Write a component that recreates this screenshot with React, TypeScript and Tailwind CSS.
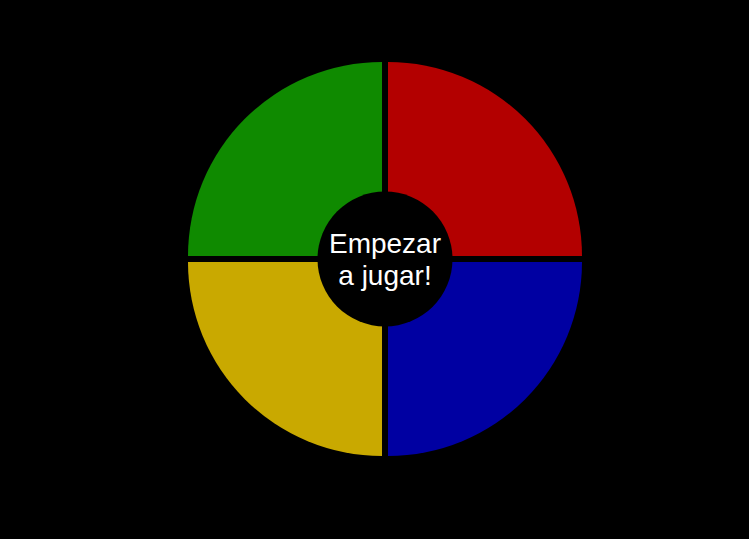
export default function App() {
  const quads = [
    { key: 'green', cls: 'bg-[#0f8a00] rounded-tl-[194px]' },
    { key: 'red', cls: 'bg-[#b30000] rounded-tr-[194px]' },
    { key: 'yellow', cls: 'bg-[#c9a900] rounded-bl-[194px]' },
    { key: 'blue', cls: 'bg-[#0000a2] rounded-br-[194px]' },
  ];

  return (
    <div className="min-h-[539px] w-full bg-black pt-[62px] pl-[188px]">
      {/* Simon board */}
      <div className="relative grid w-[394px] grid-cols-2 gap-[6px]">
        {quads.map((q) => (
          <button key={q.key} className={`h-[194px] w-[194px] ${q.cls}`} />
        ))}
        <button
          className="absolute left-1/2 top-1/2 flex h-[135px] w-[135px] -translate-x-1/2 -translate-y-1/2 items-center justify-center rounded-full bg-black text-center text-[28px] leading-[32px] text-white"
          style={{ fontFamily: '"Liberation Sans", Arial, sans-serif' }}
        >
          Empezar
          <br />
          a jugar!
        </button>
      </div>
    </div>
  );
}
